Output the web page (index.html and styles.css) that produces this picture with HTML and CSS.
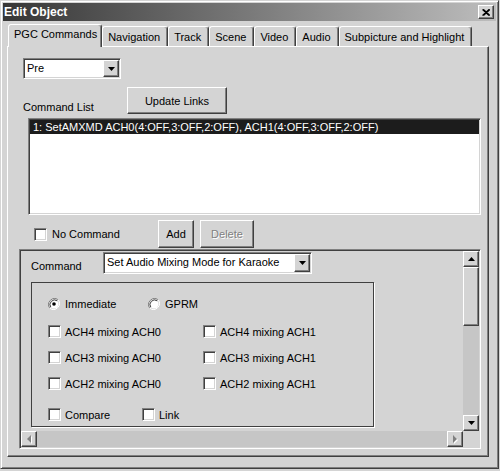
FILE: index.html
```html
<!DOCTYPE html>
<html>
<head>
<meta charset="utf-8">
<title>Edit Object</title>
<link rel="stylesheet" href="styles.css">
</head>
<body>
<div class="window">
  <div class="titlebar">
    <span class="title">Edit Object</span>
    <button class="close" aria-label="Close">
      <svg width="8" height="7" viewBox="0 0 8 7"><path d="M0.5 0.5 L7 6.5 M1.5 0.5 L8 6.5 M7 0.5 L0.5 6.5 M8 0.5 L1.5 6.5" stroke="#000" stroke-width="1.1" fill="none"/></svg>
    </button>
  </div>

  <div class="tabs">
    <div class="tab active">PGC Commands</div>
    <div class="tab">Navigation</div>
    <div class="tab">Track</div>
    <div class="tab">Scene</div>
    <div class="tab">Video</div>
    <div class="tab">Audio</div>
    <div class="tab">Subpicture and Highlight</div>
  </div>

  <div class="panel">
    <div class="combo pre">
      <span class="field">Pre</span>
      <span class="drop"><svg width="7" height="4" viewBox="0 0 7 4"><polygon points="0,0 7,0 3.5,4" fill="#000"/></svg></span>
    </div>

    <div class="list-head">
      <span class="label">Command List</span>
      <button class="btn update">Update Links</button>
    </div>

    <div class="listbox">
      <div class="item sel">1: SetAMXMD ACH0(4:OFF,3:OFF,2:OFF), ACH1(4:OFF,3:OFF,2:OFF)</div>
    </div>

    <div class="actions">
      <label class="check nocmd"><span class="box"></span>No Command</label>
      <button class="btn add">Add</button>
      <button class="btn delete" disabled>Delete</button>
    </div>

    <div class="scrollframe">
      <div class="viewport">
        <div class="cmd-row">
          <span class="label">Command</span>
          <div class="combo cmd">
            <span class="field">Set Audio Mixing Mode for Karaoke</span>
            <span class="drop"><svg width="7" height="4" viewBox="0 0 7 4"><polygon points="0,0 7,0 3.5,4" fill="#000"/></svg></span>
          </div>
        </div>

        <div class="group">
          <div class="radio-row">
            <label class="radio-opt">
              <svg class="radio" width="12" height="12" viewBox="0 0 12 12">
                <path d="M10.2 1.8 A6 6 0 0 0 1.8 10.2" stroke="#808080" fill="none"/>
                <path d="M1.8 10.2 A6 6 0 0 0 10.2 1.8" stroke="#fff" fill="none"/>
                <circle cx="6" cy="6" r="4.5" fill="#fff"/>
                <path d="M9.2 2.8 A4.6 4.6 0 0 0 2.8 9.2" stroke="#404040" fill="none"/>
                <circle cx="6" cy="6" r="1.8" fill="#000"/>
              </svg>
              Immediate
            </label>
            <label class="radio-opt">
              <svg class="radio" width="12" height="12" viewBox="0 0 12 12">
                <path d="M10.2 1.8 A6 6 0 0 0 1.8 10.2" stroke="#808080" fill="none"/>
                <path d="M1.8 10.2 A6 6 0 0 0 10.2 1.8" stroke="#fff" fill="none"/>
                <circle cx="6" cy="6" r="4.5" fill="#fff"/>
                <path d="M9.2 2.8 A4.6 4.6 0 0 0 2.8 9.2" stroke="#404040" fill="none"/>
              </svg>
              GPRM
            </label>
          </div>

          <div class="mix-grid">
            <label class="check"><span class="box"></span>ACH4 mixing ACH0</label>
            <label class="check"><span class="box"></span>ACH4 mixing ACH1</label>
            <label class="check"><span class="box"></span>ACH3 mixing ACH0</label>
            <label class="check"><span class="box"></span>ACH3 mixing ACH1</label>
            <label class="check"><span class="box"></span>ACH2 mixing ACH0</label>
            <label class="check"><span class="box"></span>ACH2 mixing ACH1</label>
          </div>

          <div class="flag-row">
            <label class="check compare"><span class="box"></span>Compare</label>
            <label class="check"><span class="box"></span>Link</label>
          </div>
        </div>
      </div>

      <div class="vscroll">
        <span class="sbtn"><svg width="7" height="4" viewBox="0 0 7 4"><polygon points="3.5,0 7,4 0,4" fill="#000"/></svg></span>
        <span class="thumb"></span>
        <span class="track"></span>
        <span class="sbtn"><svg width="7" height="4" viewBox="0 0 7 4"><polygon points="0,0 7,0 3.5,4" fill="#000"/></svg></span>
      </div>

      <div class="hscroll">
        <span class="sbtn"><svg width="5" height="9" viewBox="0 0 5 9"><polygon points="5,1 5,9 1,5" fill="#fff"/><polygon points="4,0 4,8 0,4" fill="#808080"/></svg></span>
        <span class="track"></span>
        <span class="sbtn"><svg width="5" height="9" viewBox="0 0 5 9"><polygon points="1,1 1,9 5,5" fill="#fff"/><polygon points="0,0 0,8 4,4" fill="#808080"/></svg></span>
      </div>

      <div class="corner"></div>
    </div>
  </div>
</div>
</body>
</html>
```

FILE: styles.css
```css
* {
  box-sizing: border-box;
}

body {
  margin: 0;
  background: #d4d4d4;
  font: 11px "Liberation Sans", Arial, sans-serif;
  color: #000;
}

/* raised / sunken bevels shared by controls */
.btn,
.close,
.drop,
.sbtn,
.thumb {
  background: #d4d4d4;
  border: 1px solid;
  border-color: #fff #404040 #404040 #fff;
  box-shadow: inset -1px -1px 0 #808080;
}

.combo,
.listbox,
.box,
.scrollframe {
  border: 1px solid;
  border-color: #808080 #fff #fff #808080;
  box-shadow: inset 1px 1px 0 #404040, inset -1px -1px 0 #d4d4d4;
  padding: 1px;
}

.window {
  width: 499px;
  height: 469px;
  border: 1px solid;
  border-color: #d4d4d4 #404040 #404040 #d4d4d4;
  box-shadow: inset 1px 1px 0 #fff, inset -1px -1px 0 #808080;
  padding: 2px;
  display: flex;
  flex-direction: column;
}

.titlebar {
  height: 18px;
  background: linear-gradient(90deg, #363636, #bdbdbd);
  display: flex;
  align-items: center;
  justify-content: space-between;
  padding: 0 2px 0 1px;
}

.title {
  color: #fff;
  font-weight: bold;
  font-size: 12px;
}

.close {
  width: 16px;
  height: 14px;
  padding: 0;
  display: flex;
  align-items: center;
  justify-content: center;
}

/* tab strip */
.tabs {
  display: flex;
  align-items: flex-end;
  margin-top: 3px;
  padding-left: 5px;
  height: 22px;
}

.tab {
  height: 20px;
  padding: 0 7px 0 5px;
  border: 1px solid;
  border-bottom: none;
  border-color: #fff #404040 transparent #fff;
  box-shadow: inset -1px 0 0 #808080;
  border-radius: 3px 3px 0 0;
  line-height: 20px;
  white-space: nowrap;
}

.tab.active {
  height: 23px;
  margin-bottom: -1px;
  padding: 0 4px 0 5px;
  background: #d4d4d4;
  position: relative;
  z-index: 1;
  line-height: 19px;
}

.panel {
  width: 482px;
  height: 411px;
  margin-left: 4px;
  border: 1px solid;
  border-color: #fff #404040 #404040 #fff;
  box-shadow: inset -1px -1px 0 #808080;
  display: flex;
  flex-direction: column;
  align-items: flex-start;
}

/* combo boxes */
.combo {
  display: flex;
  background: #fff;
}

.combo .field {
  flex: 1;
  padding-left: 2px;
  white-space: nowrap;
  overflow: hidden;
}

.combo .drop {
  width: 16px;
  display: flex;
  align-items: center;
  justify-content: center;
}

.pre {
  margin: 11px 0 0 15px;
  width: 98px;
  height: 21px;
}

.pre .field {
  line-height: 17px;
}

.list-head {
  display: flex;
  align-items: flex-end;
  margin: 8px 0 0 15px;
}

.list-head .label {
  width: 104px;
  padding-bottom: 1px;
}

.btn {
  font: inherit;
  color: #000;
  padding: 0;
}

.update {
  width: 100px;
  height: 27px;
}

.listbox {
  margin: 4px 0 0 20px;
  width: 453px;
  height: 97px;
  background: #fff;
}

.item {
  height: 14px;
  line-height: 14px;
  padding-left: 3px;
  white-space: nowrap;
}

.item.sel {
  background: #1c1c1c;
  color: #fff;
}

.actions {
  display: flex;
  align-items: center;
  margin: 5px 0 0 26px;
  height: 28px;
}

.check {
  display: flex;
  align-items: center;
  gap: 4px;
  white-space: nowrap;
}

.box {
  width: 13px;
  height: 13px;
  background: #fff;
  flex: none;
}

.nocmd {
  width: 124px;
  gap: 5px;
}

.add {
  width: 36px;
  height: 28px;
}

.delete {
  width: 54px;
  height: 28px;
  margin-left: 6px;
  color: #808080;
  text-shadow: 1px 1px 0 #fff;
}

/* scrolling command editor */
.scrollframe {
  margin: 1px 0 0 11px;
  width: 462px;
  height: 200px;
  display: grid;
  grid-template-columns: 1fr 16px;
  grid-template-rows: 1fr 16px;
}

.viewport {
  overflow: hidden;
}

.cmd-row {
  display: flex;
  align-items: center;
  margin-top: 1px;
  padding-left: 10px;
}

.cmd-row .label {
  width: 72px;
  padding-top: 5px;
}

.cmd {
  width: 209px;
  height: 22px;
}

.cmd .field {
  line-height: 17px;
}

.group {
  margin: 8px 0 0 10px;
  width: 343px;
  height: 145px;
  border: 1px solid #404040;
  box-shadow: 1px 1px 0 #fff;
  padding: 14px 0 0 16px;
}

.radio-row {
  display: flex;
  height: 13px;
  align-items: center;
}

.radio-opt {
  display: flex;
  align-items: center;
  gap: 5px;
  width: 100px;
}

.mix-grid {
  display: grid;
  grid-template-columns: 155px 1fr;
  grid-auto-rows: 13px;
  row-gap: 13px;
  margin-top: 15px;
}

.flag-row {
  display: flex;
  height: 13px;
  margin-top: 18px;
}

.compare {
  width: 94px;
}

.vscroll,
.hscroll {
  display: flex;
}

.vscroll {
  flex-direction: column;
}

.sbtn {
  width: 16px;
  height: 16px;
  flex: none;
  display: flex;
  align-items: center;
  justify-content: center;
}

.thumb {
  height: 59px;
  flex: none;
}

.track {
  flex: 1;
  background: #c6c6c6;
}

.corner {
  background: #d4d4d4;
}
```
